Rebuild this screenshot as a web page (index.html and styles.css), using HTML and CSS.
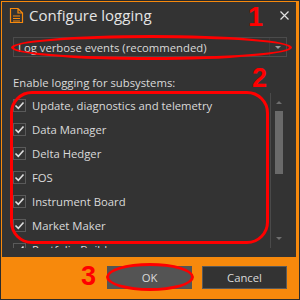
FILE: index.html
```html
<!DOCTYPE html>
<html lang="en">
  <head>
    <meta charset="UTF-8" />
    <title>Configure logging</title>
    <link rel="stylesheet" href="styles.css">
  </head>
  <body>
    <div class="window">
      <section class="panel">
        <header class="titlebar">
          <svg class="doc-icon" width="15" height="17" viewBox="0 0 15 17">
            <path d="M1.5 1.5 H9 L13.5 6 V15.5 H1.5 Z M9 1.5 V6 H13.5" fill="none" stroke="#f7890c" stroke-width="1.2" />
            <path d="M4 9 H11 M4 11.5 H11 M4 14 H11" stroke="#f7890c" stroke-width="1" />
          </svg>
          <h1>Configure logging</h1>
          <svg class="close" width="9" height="9" viewBox="0 0 9 9">
            <path d="M0.5 0.5 L8.5 8.5 M8.5 0.5 L0.5 8.5" stroke="#e0e0e0" stroke-width="1.2" />
          </svg>
        </header>

        <div class="combo">
          <span class="combo-text">Log verbose events (recommended)</span>
          <span class="combo-btn"><i class="arrow-down"></i></span>
        </div>

        <p class="label">Enable logging for subsystems:</p>

        <div class="listbox">
          <ul class="items">
            <li><span class="check"></span>Update, diagnostics and telemetry</li>
            <li><span class="check"></span>Data Manager</li>
            <li><span class="check"></span>Delta Hedger</li>
            <li><span class="check"></span>FOS</li>
            <li><span class="check"></span>Instrument Board</li>
            <li><span class="check"></span>Market Maker</li>
            <li><span class="check"></span>Portfolio Builder</li>
          </ul>
          <div class="scrollbar">
            <i class="arrow-up"></i>
            <div class="thumb"></div>
            <i class="arrow-down"></i>
          </div>
        </div>
      </section>

      <footer class="footer">
        <button class="btn default">OK</button>
        <button class="btn">Cancel</button>
      </footer>

      <!-- red annotations drawn over the dialog -->
      <div class="mark mark-combo"></div>
      <div class="mark mark-list"></div>
      <div class="mark mark-ok"></div>
      <span class="num num-1">1</span>
      <span class="num num-2">2</span>
      <span class="num num-3">3</span>
    </div>
  </body>
</html>
```

FILE: styles.css
```css
:root {
  --orange: #f7890c;
  --panel: #333333;
  --edge: #4b4b4b;
  --text: #dadada;
  --red: #ff0000;
}
* {
  margin: 0;
  padding: 0;
  box-sizing: border-box;
}
body {
  background-color: #2b2b2b;
  font-family: "Open Sans", "Noto Sans", sans-serif;
  color: var(--text);
}
.window {
  position: relative;
  width: 298px;
  height: 298px;
  margin: 1px;
  display: flex;
  flex-direction: column;
  background-color: var(--orange);
}
.panel {
  height: 255px;
  margin: 1px 3px 0 1px;
  display: flex;
  flex-direction: column;
  background-color: var(--panel);
}

.titlebar {
  height: 26px;
  display: flex;
  align-items: center;
  padding: 0 7px;
}
.doc-icon {
  margin-right: 5px;
}
.titlebar h1 {
  flex: 1;
  font-size: 15px;
  font-weight: normal;
  color: #e4e4e4;
}

.combo {
  height: 20px;
  margin: 9px 9px 0 11px;
  display: flex;
  border: 1px solid var(--edge);
  font-size: 11.3px;
}
.combo-text {
  flex: 1;
  display: flex;
  align-items: center;
  padding-left: 4px;
}
.combo-btn {
  width: 17px;
  display: flex;
  align-items: center;
  justify-content: center;
  border-left: 1px solid #3d3d3d;
}

.arrow-down,
.arrow-up {
  width: 0;
  height: 0;
  border-left: 3px solid transparent;
  border-right: 3px solid transparent;
}
.arrow-down {
  border-top: 3px solid #9a9a9a;
}
.arrow-up {
  border-bottom: 3px solid #6e6e6e;
}

.label {
  margin: 18px 0 0 11px;
  font-size: 11.3px;
  line-height: 16px;
}

.listbox {
  height: 155px;
  margin: 2px 9px 0 8px;
  display: flex;
  overflow: hidden;
}
.items {
  flex: 1;
  list-style: none;
}
.items li {
  height: 24px;
  display: flex;
  align-items: center;
  gap: 6px;
  padding-left: 3px;
  font-size: 11.3px;
}
.check {
  width: 13px;
  height: 13px;
  border: 1px solid #5a5a5a;
  background: no-repeat center / 11px 11px
    url("data:image/svg+xml,%3Csvg xmlns='http://www.w3.org/2000/svg' viewBox='0 0 11 11'%3E%3Cpath d='M1.5 5.5 L4.3 8.3 L9.5 2.5' fill='none' stroke='%23dedede' stroke-width='1.6'/%3E%3C/svg%3E");
}

.scrollbar {
  width: 17px;
  display: flex;
  flex-direction: column;
  align-items: center;
  padding: 8px 0 8px;
  border-left: 1px solid #4a4a4a;
}
.thumb {
  width: 8px;
  height: 63px;
  margin-top: 7px;
  background-color: #6a6a6a;
}
.scrollbar .arrow-down {
  margin-top: auto;
  border-top-color: #6e6e6e;
}

.footer {
  flex: 1;
  display: flex;
  justify-content: flex-end;
  align-items: flex-start;
  gap: 10px;
  padding: 9px 12px 0 0;
}
.btn {
  width: 85px;
  height: 23px;
  border: 1px solid #5a5a5a;
  background-color: var(--panel);
  color: var(--text);
  font-family: "Open Sans", "Noto Sans", sans-serif;
  font-size: 11.3px;
}
.btn.default {
  background-color: #545454;
  border-color: #545454;
}

.mark {
  position: absolute;
  border: 3px solid var(--red);
}
.mark-combo {
  left: 10px;
  top: 34px;
  width: 281px;
  height: 25px;
  border-radius: 50%;
}
.mark-list {
  left: 9px;
  top: 90px;
  width: 259px;
  height: 153px;
  border-radius: 22px;
}
.mark-ok {
  left: 105px;
  top: 262px;
  width: 88px;
  height: 28px;
  border-radius: 50%;
}

.num {
  position: absolute;
  font-family: "Liberation Sans", Arial, sans-serif;
  font-size: 27px;
  line-height: 27px;
  font-weight: bold;
  color: var(--red);
}
.num-1 {
  left: 247px;
  top: 3px;
}
.num-2 {
  left: 251px;
  top: 64px;
}
.num-3 {
  left: 80px;
  top: 262px;
}
```
